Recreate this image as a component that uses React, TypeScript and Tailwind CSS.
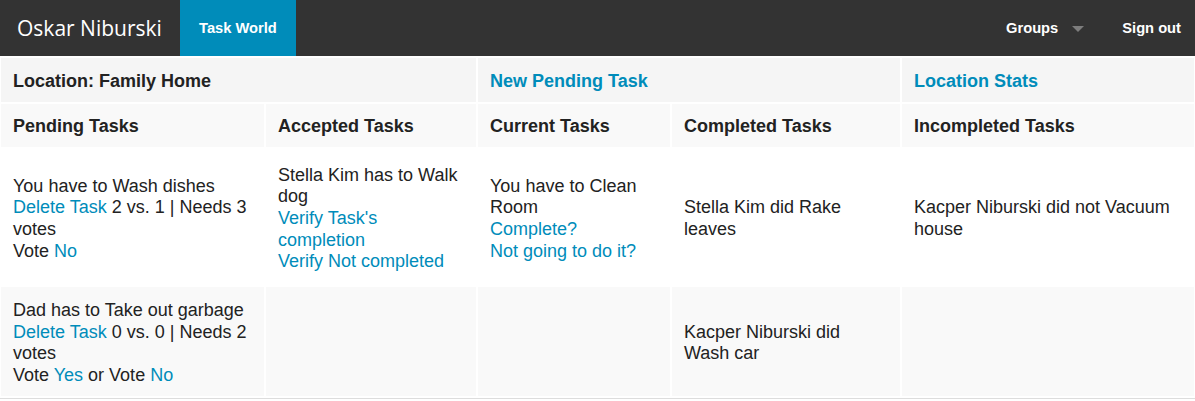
import React from 'react';

const cell = 'px-3 pt-[12.5px] pb-[9.5px] align-middle text-left';

function Link({ children }: { children: React.ReactNode }) {
  return <a className="text-[#008cba] cursor-pointer">{children}</a>;
}

export default function App() {
  return (
    <div className="min-h-screen bg-white overflow-hidden font-['Liberation_Sans',Arial,sans-serif]">
      {/* top bar */}
      <nav className="flex h-14 items-stretch bg-[#333333] text-white">
        <div className="flex w-[180px] items-center pl-[17px] font-['Open_Sans',sans-serif] text-[21px] leading-none">
          Oskar Niburski
        </div>
        <div className="flex items-center bg-[#008cba] px-[19px] pt-px text-[14.7px] font-bold">Task World</div>
        <div className="ml-auto flex items-center pr-[14px] pt-px text-[14.7px] font-bold">
          <span>Groups</span>
          <span className="ml-[14px] h-0 w-0 border-l-[6px] border-r-[6px] border-t-[6px] border-l-transparent border-r-transparent border-t-[#7d7d7d]" />
          <span className="ml-[38px]">Sign out</span>
        </div>
      </nav>

      {/* task table */}
      <table className="-ml-px w-[1197px] table-fixed border-separate border-spacing-[2px] border-b border-[#dddddd] text-[18px] leading-[21.7px] text-[#222222]">
        <colgroup>
          <col className="w-[263px]" />
          <col className="w-[210px]" />
          <col className="w-[192px]" />
          <col className="w-[228px]" />
          <col className="w-[292px]" />
        </colgroup>
        <tbody>
          <tr className="bg-[#f5f5f5] font-bold">
            <td colSpan={2} className={cell}>Location: Family Home</td>
            <td colSpan={2} className={cell}><Link>New Pending Task</Link></td>
            <td className={cell}><Link>Location Stats</Link></td>
          </tr>
          <tr className="bg-[#f9f9f9] font-bold">
            <td className={cell}>Pending Tasks</td>
            <td className={cell}>Accepted Tasks</td>
            <td className={cell}>Current Tasks</td>
            <td className={cell}>Completed Tasks</td>
            <td className={cell}>Incompleted Tasks</td>
          </tr>
          <tr className="h-[136px] bg-white">
            <td className={cell}>
              You have to Wash dishes
              <br />
              <Link>Delete Task</Link> 2 vs. 1 | Needs 3 votes
              <br />
              Vote <Link>No</Link>
            </td>
            <td className={cell}>
              Stella Kim has to Walk dog
              <br />
              <Link>Verify Task's completion</Link>
              <br />
              <Link>Verify Not completed</Link>
            </td>
            <td className={cell}>
              You have to Clean Room
              <br />
              <Link>Complete?</Link>
              <br />
              <Link>Not going to do it?</Link>
            </td>
            <td className={cell}>Stella Kim did Rake leaves</td>
            <td className={cell}>Kacper Niburski did not Vacuum house</td>
          </tr>
          <tr className="bg-[#f9f9f9]">
            <td className={cell}>
              Dad has to Take out garbage
              <br />
              <Link>Delete Task</Link> 0 vs. 0 | Needs 2 votes
              <br />
              Vote <Link>Yes</Link> or Vote <Link>No</Link>
            </td>
            <td className={cell}></td>
            <td className={cell}></td>
            <td className={cell}>Kacper Niburski did Wash car</td>
            <td className={cell}></td>
          </tr>
        </tbody>
      </table>
    </div>
  );
}
